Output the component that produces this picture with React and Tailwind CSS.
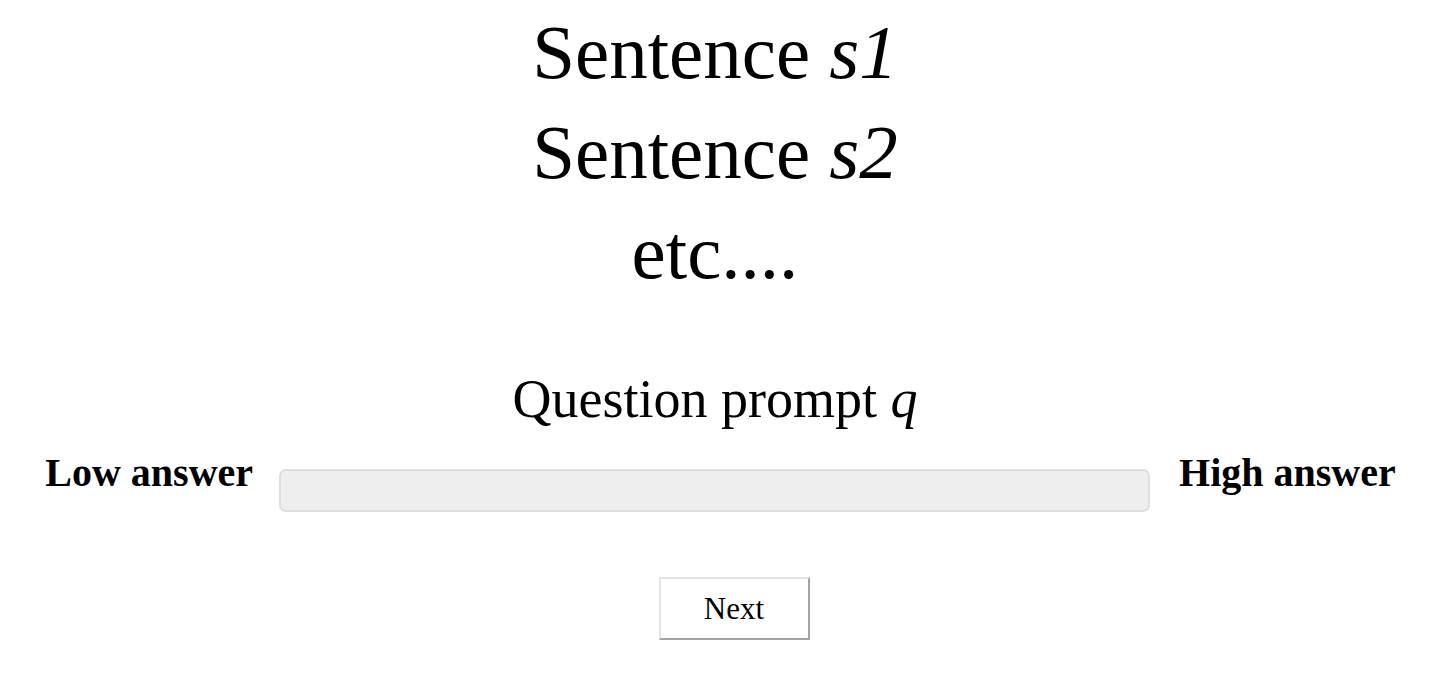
export default function App() {
  return (
    <div className="w-[1430px] h-[687px] bg-white text-black flex flex-col items-center" style={{ fontFamily: '"Liberation Serif", "Times New Roman", serif' }}>
      <div className="pt-[2px] flex flex-col items-center text-[77px] leading-[100px]">
        <div>Sentence <i>s1</i></div>
        <div>Sentence <i>s2</i></div>
        <div>etc....</div>
      </div>
      <div className="mt-[65px] text-[54px] leading-[64px]">
        Question prompt <i>q</i>
      </div>
      <div className="mt-[19px] pl-[11px] flex items-start justify-center w-full">
        <div className="text-[40px] leading-[45px] font-bold">Low answer</div>
        <div className="ml-[26px] mr-[29px] mt-[19px] w-[871px] h-[43px] bg-[#eeeeee] border-2 border-[#dedede] rounded-[7px]"></div>
        <div className="text-[40px] leading-[45px] font-bold">High answer</div>
      </div>
      <button className="mt-[65px] ml-[38px] w-[151px] h-[63px] bg-white border-2 border-t-[#e3e3e3] border-l-[#e3e3e3] border-b-[#a3a3a3] border-r-[#a3a3a3] text-[31px] leading-none">
        Next
      </button>
    </div>
  );
}
